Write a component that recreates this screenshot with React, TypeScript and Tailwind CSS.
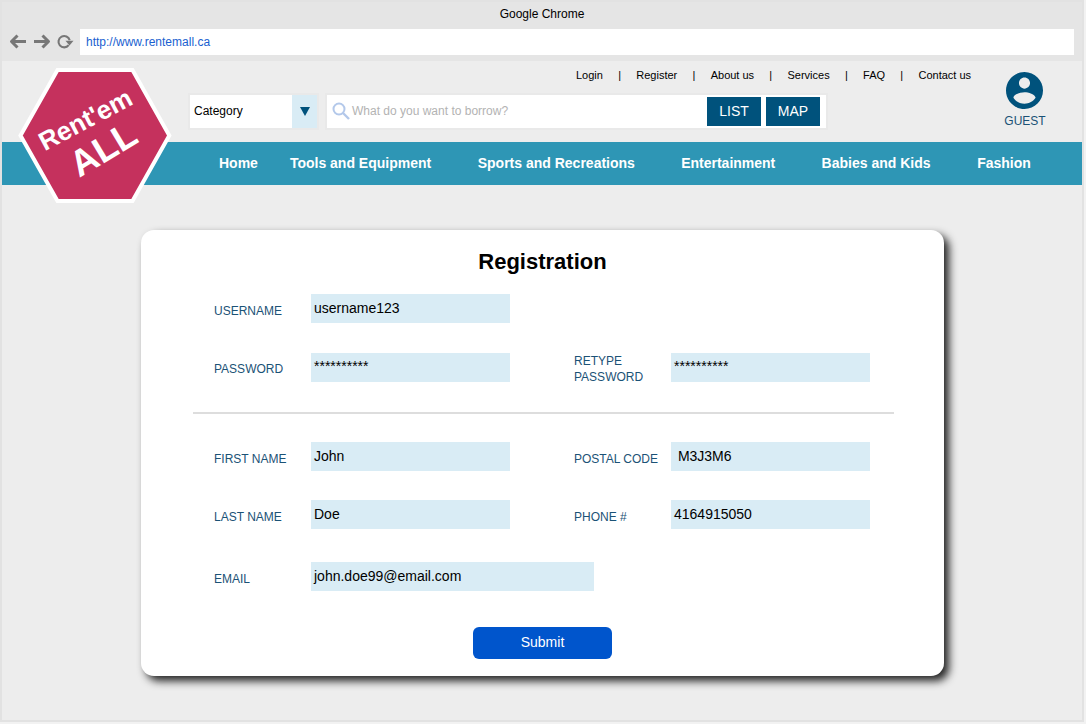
import { ReactNode } from 'react';

function Field({ label, value, className = '', inputClass = 'w-[199px] pl-[3px] pt-[6px]', labelClass = 'pt-[9px]' }: {
  label: ReactNode;
  value: string;
  className?: string;
  inputClass?: string;
  labelClass?: string;
}) {
  return (
    <div className={`flex h-[29px] ${className}`}>
      <div className={`w-[97px] shrink-0 whitespace-nowrap text-[12px] leading-4 text-[#1b5276] ${labelClass}`}>{label}</div>
      <div className={`h-[29px] shrink-0 whitespace-pre bg-[#d9ecf5] text-[14px] leading-4 text-black ${inputClass}`}>{value}</div>
    </div>
  );
}

const topLinks = ['Login', 'Register', 'About us', 'Services', 'FAQ', 'Contact us'];

const navLinks = [
  { text: 'Home', gap: 'ml-[217px]' },
  { text: 'Tools and Equipment', gap: 'ml-[32px]' },
  { text: 'Sports and Recreations', gap: 'ml-[46.5px]' },
  { text: 'Entertainment', gap: 'ml-[46.3px]' },
  { text: 'Babies and Kids', gap: 'ml-[46.3px]' },
  { text: 'Fashion', gap: 'ml-[46.7px]' },
];

function Logo() {
  return (
    <svg className="absolute left-[17px] top-[66px]" width="156" height="138" viewBox="0 0 156 138">
      <polygon points="40.5,4 115.5,4 152.3,69.5 115.5,135 40.5,135 3.5,69.5" fill="#c5315d" stroke="#fff" strokeWidth="4" />
      <g fill="#fff" fontFamily="Liberation Sans, Arial, sans-serif" fontWeight="700" textAnchor="middle">
        <text transform="translate(72.5 61.5) rotate(-28)" fontSize="26">Rent'em</text>
        <text transform="translate(92.7 93.7) rotate(-31)" fontSize="36.5">ALL</text>
      </g>
    </svg>
  );
}

export default function App() {
  return (
    <div className="relative flex h-[724px] w-[1086px] overflow-hidden bg-[#f2f2f2] font-['Liberation_Sans',Arial,sans-serif]">
      <div className="flex h-[722px] w-[1084px] flex-col border-2 border-[#e2e2e2] bg-[#ededed]">
        <header className="flex h-[59px] shrink-0 flex-col bg-[#e5e5e5]">
          <div className="h-[27px] pt-[5px] text-center text-[12px] leading-[14px] text-black">Google Chrome</div>
          <div className="flex h-[26px] items-center">
            <svg className="ml-[7px] shrink-0" width="68" height="20" viewBox="0 0 68 20" fill="none" stroke="#777" strokeWidth="3" strokeLinejoin="round">
              <path d="M8.5 3.5 2.5 9.5 8.5 15.5M3 9.5h14M33.5 3.5 39.5 9.5 33.5 15.5M39 9.5h-14" />
              <path d="M59.7 13.2a5.7 5.7 0 1 1 1-5" strokeWidth="2.1" />
              <path d="M56.5 8.8H64.5L60.5 13.5Z" fill="#777" stroke="none" />
            </svg>
            <div className="ml-[3px] h-[26px] w-[994px] bg-white pl-[6px] pt-[6px] text-[12px] leading-[14px] text-[#1a5fd0]">http://www.rentemall.ca</div>
          </div>
        </header>

        <section className="flex h-[81px] shrink-0 flex-col">
          <div className="ml-[574px] flex h-[32px] items-start gap-[15.27px] pt-[8px] text-[11px] leading-[13px] text-black">
            {topLinks.flatMap((text, i) => [
              ...(i ? [<span key={`sep-${text}`}>|</span>] : []),
              <span key={text} className="whitespace-nowrap">{text}</span>,
            ])}
          </div>
          <div className="flex h-[37px] items-start">
            <div className="ml-[186px] flex h-[37px] w-[131px] shrink-0 border-2 border-[#e9e9e9] bg-white">
              <div className="w-[102px] pl-[4px] pt-[9px] text-[12px] leading-[14px] text-black">Category</div>
              <div className="flex flex-1 items-center justify-center bg-[#d9ecf5]">
                <svg width="10" height="9" viewBox="0 0 10 9"><path d="M0 0h10L5 9Z" fill="#00527c" /></svg>
              </div>
            </div>
            <div className="ml-[6px] flex h-[37px] w-[503px] shrink-0 border-2 border-[#e9e9e9] bg-white">
              <svg className="ml-[5px] mt-[7px] shrink-0" width="18" height="18" viewBox="0 0 18 18" fill="none" stroke="#b3c8ea">
                <circle cx="7" cy="7" r="5.5" strokeWidth="2" />
                <path d="m11 11 6 6" strokeWidth="2.4" />
              </svg>
              <div className="ml-[2px] w-[355px] pt-[9px] text-[12px] leading-[14px] text-[#b3b3b3]">What do you want to borrow?</div>
              <div className="mt-[2px] h-[29px] w-[54px] bg-[#00527c] pt-[6px] text-center text-[14px] leading-4 text-white">LIST</div>
              <div className="ml-[5px] mt-[2px] h-[29px] w-[54px] bg-[#00527c] pt-[6px] text-center text-[14px] leading-4 text-white">MAP</div>
            </div>
          </div>
        </section>

        <nav className="flex h-[43px] shrink-0 bg-[#2e96b5] pt-[13px] text-[14px] font-bold leading-4 text-white">
          {navLinks.map((l) => (
            <span key={l.text} className={`whitespace-nowrap ${l.gap}`}>{l.text}</span>
          ))}
        </nav>

        <main className="ml-[139px] mt-[45px] flex h-[446px] w-[803px] shrink-0 flex-col rounded-[13px] bg-white shadow-[5px_5px_9px_#000000d9]">
          <h1 className="pt-[19px] text-center text-[22px] font-bold leading-[26px] text-black">Registration</h1>
          <Field className="ml-[73px] mt-[19px]" label="USERNAME" value="username123" />
          <div className="ml-[73px] mt-[30px] flex">
            <Field label="PASSWORD" value="**********" labelClass="pt-[8px]" inputClass="w-[199px] pl-[3px] pt-[5px]" />
            <Field className="ml-[64px]" label={<>RETYPE<br />PASSWORD</>} value="**********" labelClass="pt-0" inputClass="w-[199px] pl-[3px] pt-[5px]" />
          </div>
          <div className="ml-[52px] mt-[30px] h-[2px] w-[701px] shrink-0 bg-[#dddddd]" />
          <div className="ml-[73px] mt-[28px] flex">
            <Field label="FIRST NAME" value="John" />
            <Field className="ml-[64px]" label="POSTAL CODE" value=" M3J3M6" />
          </div>
          <div className="ml-[73px] mt-[29px] flex">
            <Field label="LAST NAME" value="Doe" />
            <Field className="ml-[64px]" label="PHONE #" value="4164915050" />
          </div>
          <Field className="ml-[73px] mt-[33px]" label="EMAIL" value="john.doe99@email.com" inputClass="w-[283px] pl-[3px] pt-[6px]" />
          <button className="ml-[332px] mt-[36px] h-8 w-[139px] shrink-0 rounded-[6px] bg-[#0055cc] pb-[2px] text-center text-[14px] leading-[30px] text-white">Submit</button>
        </main>
      </div>

      <Logo />
      <div className="absolute left-[1000px] top-[72px] flex w-[50px] flex-col items-center text-[12px] leading-[14px] text-[#1b5276]">
        <svg className="mr-px" width="37" height="37" viewBox="2 2 20 20" fill="#00527c">
          <path d="M12 2C6.48 2 2 6.48 2 12s4.48 10 10 10 10-4.48 10-10S17.52 2 12 2zm0 3c1.66 0 3 1.34 3 3s-1.34 3-3 3-3-1.34-3-3 1.34-3 3-3zm0 14.2c-2.5 0-4.71-1.28-6-3.22.03-1.99 4-3.08 6-3.08 1.99 0 5.97 1.09 6 3.08-1.29 1.94-3.5 3.22-6 3.22z" />
        </svg>
        <span className="mt-[5px]">GUEST</span>
      </div>
    </div>
  );
}
